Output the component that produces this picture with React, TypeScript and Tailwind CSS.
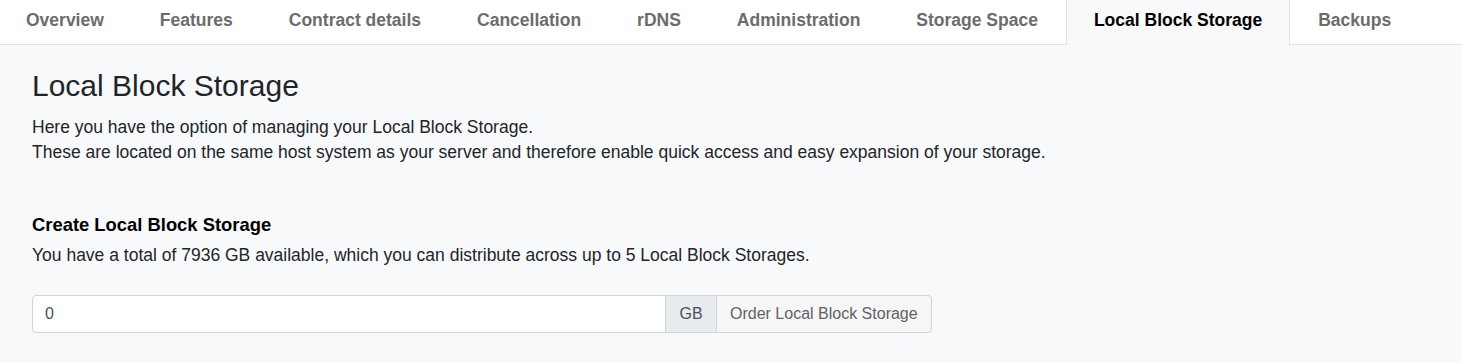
import React from "react";

const tabs = [
  "Overview",
  "Features",
  "Contract details",
  "Cancellation",
  "rDNS",
  "Administration",
  "Storage Space",
  "Local Block Storage",
  "Backups",
];

export default function App() {
  return (
    <div className="min-h-[363px] bg-[#f8f9fa] text-[#212529] font-['Liberation_Sans',Arial,sans-serif]">
      <nav className="flex h-[45px] bg-white border-b border-[#dee2e6]">
        <div className="flex -ml-[2px]">
          {tabs.map((t) => {
            const active = t === "Local Block Storage";
            return (
              <div
                key={t}
                className={
                  active
                    ? "h-[45px] px-[27px] pt-[8px] border-x border-[#dee2e6] bg-[#f8f9fa] text-[17.5px] font-bold text-black leading-[24px]"
                    : "h-[44px] px-[27px] pt-[8px] border-x border-transparent text-[17.5px] font-bold text-[#6c6c6c] leading-[24px]"
                }
              >
                {t}
              </div>
            );
          })}
        </div>
      </nav>
      <main className="px-8 pt-[23px]">
        <h2 className="text-[30px] leading-[36px] text-[#212529] mb-[11px]">Local Block Storage</h2>
        <p className="text-[17.5px] leading-[24.5px]">
          Here you have the option of managing your Local Block Storage.
          <br />
          These are located on the same host system as your server and therefore enable quick access and easy expansion of your storage.
        </p>
        <h5 className="mt-[50px] text-[18.4px] leading-[22px] font-bold text-black">Create Local Block Storage</h5>
        <p className="mt-[7px] text-[17.5px] leading-[24px]">
          You have a total of 7936 GB available, which you can distribute across up to 5 Local Block Storages.
        </p>
        <div className="mt-[28px] flex h-[38px] text-[16px]">
          <input
            type="text"
            defaultValue="0"
            className="w-[634px] px-3 bg-white border border-[#ced4da] rounded-l-[4px] text-[#495057] outline-none"
          />
          <span className="flex items-center w-[50px] justify-center bg-[#e9ecef] border-y border-[#ced4da] text-[#495057]">GB</span>
          <button className="px-[13px] bg-[#f6f6f6] border border-[#ced4da] rounded-r-[4px] text-[#5f6368]">
            Order Local Block Storage
          </button>
        </div>
      </main>
    </div>
  );
}
